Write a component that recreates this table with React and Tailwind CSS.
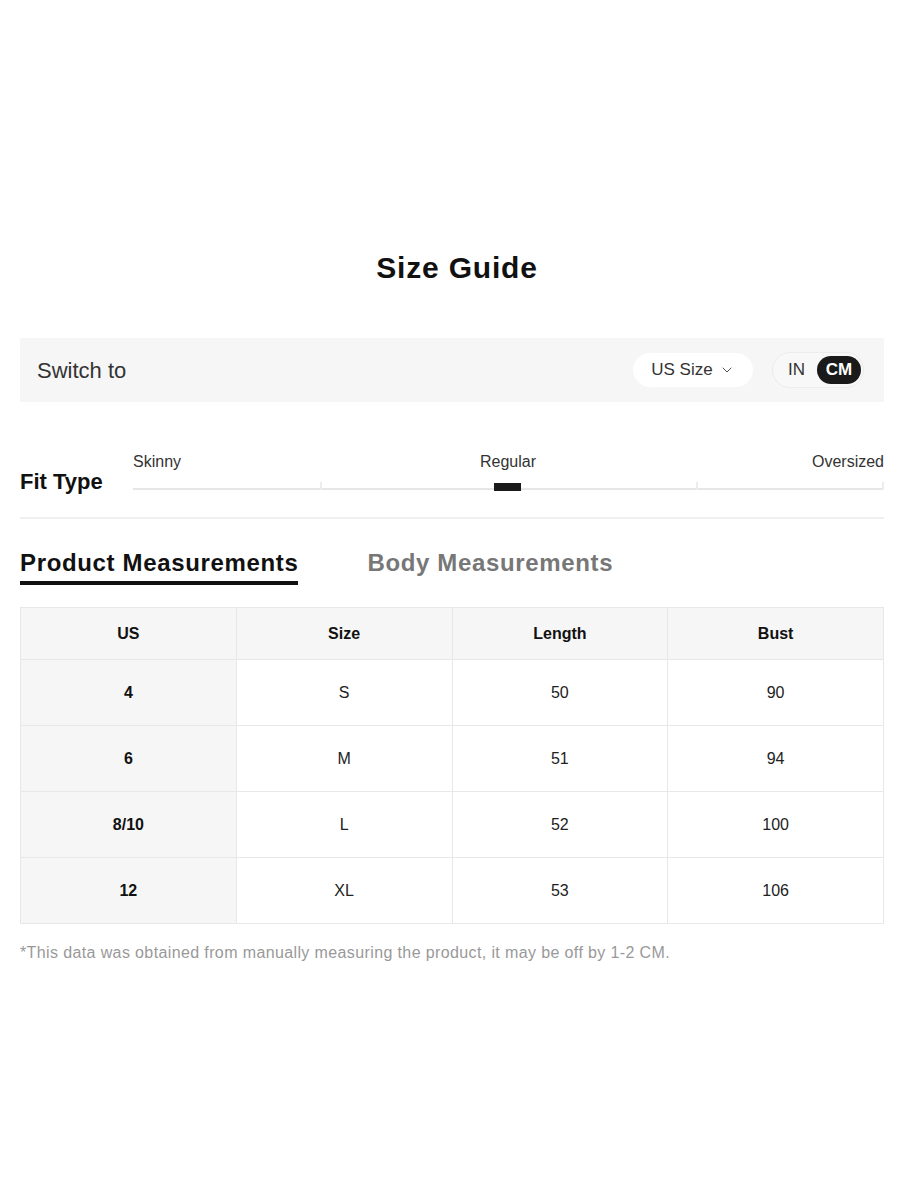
import { ChevronDown } from 'lucide-react'

const rows = [
  ['4', 'S', '50', '90'],
  ['6', 'M', '51', '94'],
  ['8/10', 'L', '52', '100'],
  ['12', 'XL', '53', '106'],
]

export default function App() {
  return (
    <div className="min-h-[1199px] bg-white pl-[20px] pr-[16px] text-[#222] [font-family:'Liberation_Sans',Arial,sans-serif]">
      {/* Title */}
      <div className="pt-[250px] h-[338px]">
        <h1 className="pl-[10px] text-center text-[30px] tracking-[0.8px] font-bold leading-[36px] text-[#111]">Size Guide</h1>
      </div>

      {/* Switch bar */}
      <div className="h-[64px] bg-[#f6f6f6] flex items-center justify-between pl-[17px] pr-[20px]">
        <span className="text-[22px] text-[#333]">Switch to</span>
        <div className="flex items-center gap-[19px]">
          <button className="h-[34px] w-[120px] rounded-full bg-white flex items-center justify-center gap-[6px] text-[17px] text-[#333]">
            US Size
            <ChevronDown className="w-4 h-4 text-[#555]" strokeWidth={1.5} />
          </button>
          <div className="h-[36px] w-[92px] rounded-full bg-[#f8f8f8] border border-[#ececec] flex items-center pl-[15px] pr-[2px] justify-between">
            <span className="text-[17px] text-[#333]">IN</span>
            <span className="h-[28px] w-[44px] rounded-full bg-[#1a1a1a] text-white text-[17px] font-bold flex items-center justify-center">CM</span>
          </div>
        </div>
      </div>

      {/* Fit type */}
      <div className="flex items-end pt-[50px] pb-[27px] border-b-2 border-[#f0f0f0]">
        <span className="w-[113px] translate-y-[5px] text-[22px] font-bold leading-[26px] text-[#111]">Fit Type</span>
        <div className="flex-1">
          <div className="relative flex justify-between text-[16px] text-[#333] leading-[20px]">
            <span>Skinny</span>
            <span className="absolute left-[375px] -translate-x-1/2">Regular</span>
            <span>Oversized</span>
          </div>
          <div className="relative mt-[14px] h-[4px] border-b-2 border-[#e6e6e6]">
            <span className="absolute left-[187px] -top-[4px] w-[2px] h-[8px] bg-[#ececec]"></span>
            <span className="absolute left-[563px] -top-[4px] w-[2px] h-[8px] bg-[#ececec]"></span>
            <span className="absolute right-0 -top-[4px] w-[2px] h-[8px] bg-[#ececec]"></span>
            <span className="absolute left-[361px] -top-[3px] w-[27px] h-[8px] bg-[#1a1a1a]"></span>
          </div>
        </div>
      </div>

      {/* Tabs */}
      <div className="flex gap-[69px] pt-[29px]">
        <div className="pb-[3px] border-b-4 border-[#111]">
          <span className="text-[24px] tracking-[0.65px] font-bold leading-[30px] text-[#111]">Product Measurements</span>
        </div>
        <span className="text-[24px] tracking-[0.65px] font-bold leading-[30px] text-[#777]">Body Measurements</span>
      </div>

      {/* Table */}
      <table className="mt-[22px] w-[864px] border-collapse table-fixed text-[16px] text-[#222]">
        <thead>
          <tr className="h-[52px] bg-[#f6f6f6]">
            {['US', 'Size', 'Length', 'Bust'].map((h) => (
              <th key={h} className="border border-[#e8e8e8] font-bold text-[#111]">{h}</th>
            ))}
          </tr>
        </thead>
        <tbody>
          {rows.map((r) => (
            <tr key={r[0]} className="h-[66px]">
              <td className="border border-[#e8e8e8] bg-[#f6f6f6] text-center font-bold text-[#111]">{r[0]}</td>
              <td className="border border-[#e8e8e8] text-center">{r[1]}</td>
              <td className="border border-[#e8e8e8] text-center">{r[2]}</td>
              <td className="border border-[#e8e8e8] text-center">{r[3]}</td>
            </tr>
          ))}
        </tbody>
      </table>

      <p className="mt-[17px] text-[16px] tracking-[0.38px] text-[#999]">*This data was obtained from manually measuring the product, it may be off by 1-2 CM.</p>
    </div>
  )
}
